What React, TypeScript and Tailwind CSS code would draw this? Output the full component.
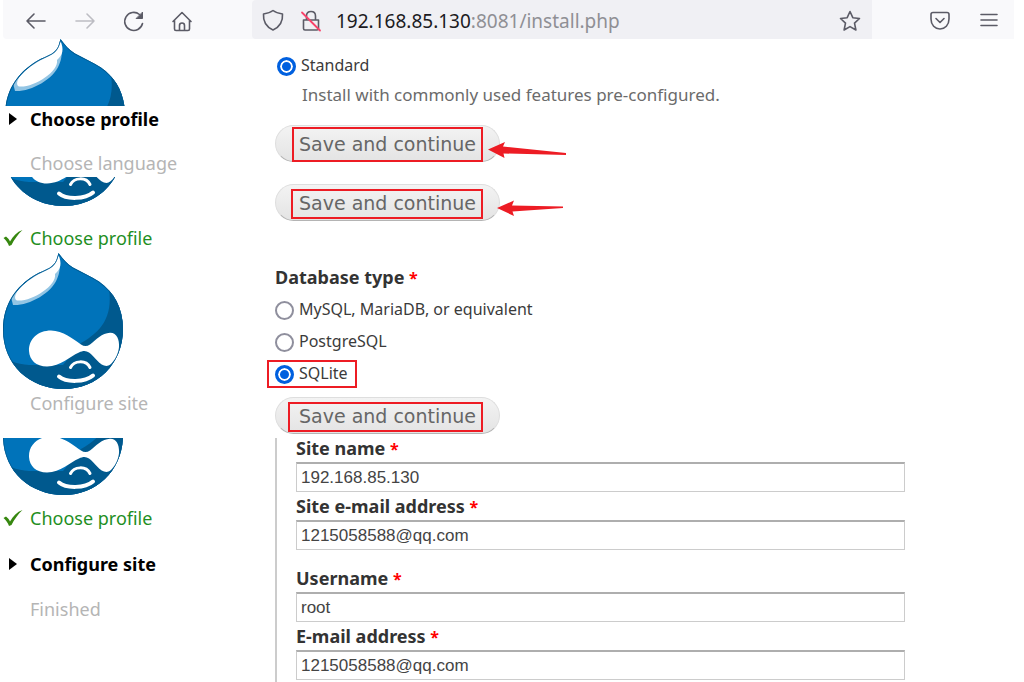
import { useState, type ReactNode } from "react";

const BODY_FONT = "font-['Noto_Sans',sans-serif]";

function Droplet({ id }: { id: string }) {
  return (
    <svg width="120" height="136" viewBox="0 0 120 136" className="block shrink-0" aria-hidden="true">
      <defs>
        <clipPath id={id}>
          <path d="M55.5 0C60 6 64 11 70 14.500C78 19 88 23 96 28.500C111 39 120 55 120 76C120 111 94 136 61 136C27 136 0 112 0 77C0 50 14 33 31 22.500C38 18 46 16.500 50 12C53.500 9 54 5 55.500 0Z" />
        </clipPath>
      </defs>
      <g clipPath={`url(#${id})`}>
        <rect width="120" height="136" fill="#0073ba" />
        <path d="M106 36C110 64 98 79 78 90L60 112H26C20 111 14 111 8 108L14 136H120V40Z" fill="#00598e" />
        <path d="M55 4C58 10 57 20 54 26C48 41 25 53 10 52L8 44L30 23Z" fill="#93c5e4" />
        <path d="M55.500 2C59 10 58 16 52 21C54 33 28 49 14 47.500C9 45 14 34 31 24C42 17 53 16 55.500 2Z" fill="#fff" />
        <path d="M55.5 0C60 6 64 11 70 14.500C78 19 88 23 96 28.500C111 39 120 55 120 76C120 111 94 136 61 136C27 136 0 112 0 77C0 50 14 33 31 22.500C38 18 46 16.500 50 12C53.500 9 54 5 55.500 0Z" fill="none" stroke="#00598e" strokeWidth="1.6" />
      </g>
      <path d="M26 98C25.500 86 35 77.500 48 77.500C60 77.500 70 86 78 91.500C81 93.500 84 93.500 87 91.500C93 87 99 80 107 79.800C114 79.600 116.500 87 116 94C115.500 102 109 113 103.500 113C97 113 91 103 86 99.500C83 97.500 80 97.500 76 99.500C66 104 58 113 44 113.500C33 113.500 26.500 107 26 98Z" fill="#fff" />
      <path d="M67.500 114.500C71 107.500 83 106.500 87 114.500" fill="none" stroke="#fff" strokeWidth="3" strokeLinecap="round" />
      <path d="M56 123.500C63 129.500 82 129.500 90 122.500" fill="none" stroke="#fff" strokeWidth="4" strokeLinecap="round" />
    </svg>
  );
}

type StepState = "done" | "active" | "todo";

const stepTone: Record<StepState, string> = {
  done: "text-[#1f8f1f]",
  active: "font-bold text-black",
  todo: "text-[#b5b5b5]",
};

function Step({ state, children, className = "" }: { state: StepState; children: ReactNode; className?: string }) {
  return (
    <li className={`flex h-[26px] items-center text-[18px] leading-6 ${stepTone[state]} ${className}`}>
      <span className="flex w-[30px] shrink-0 items-center pl-[3px]">
        {state === "done" && (
          <svg width="20" height="18" viewBox="0 0 20 18" aria-hidden="true">
            <path d="M0.500 9L3 7.500C5 9 6 10.500 7 12.500C10 7 14 3 19.500 1C15 5 11 11 8.500 16L6 17C5 14 3 11 0.500 9Z" fill="#36870f" />
          </svg>
        )}
        {state === "active" && (
          <svg width="14" height="12" viewBox="0 0 14 12" aria-hidden="true">
            <path d="M6 0L14 6L6 12Z" fill="#000" />
          </svg>
        )}
      </span>
      {children}
    </li>
  );
}

function SaveButton({ className = "", children }: { className?: string; children?: ReactNode }) {
  return (
    <div className={`relative w-[225px] ${className}`}>
      <button
        type="button"
        className="block h-[37px] w-full rounded-full border border-[#dedede] border-b-[#b4b4b4] bg-linear-to-b from-[#f3f3f3] to-[#e4e4e4] pt-px font-['DejaVu_Sans',Verdana,sans-serif] text-[19px] leading-[34px] text-[#666]"
      >
        Save and continue
      </button>
      {children}
    </div>
  );
}

function Radio(props: { name: string; label: string; checked: boolean; onChange: () => void; className?: string }) {
  return (
    <label className={`flex items-center gap-[5px] text-base leading-[32px] text-[#3b3b3b] ${props.className ?? ""}`}>
      <input
        type="radio"
        name={props.name}
        checked={props.checked}
        onChange={props.onChange}
        className="mt-[2px] size-[19px] shrink-0 appearance-none rounded-full border-2 border-[#8f8f9d] bg-white checked:border-[3px] checked:border-[#0060df] checked:bg-[#0060df] checked:shadow-[inset_0_0_0_2px_white]"
      />
      {props.label}
    </label>
  );
}

function Required() {
  return <span className="text-base leading-5 text-[#f00]">*</span>;
}

function Field({ id, label, value, className = "" }: { id: string; label: string; value: string; className?: string }) {
  return (
    <div className={className}>
      <label htmlFor={id} className="block h-6 text-[18px] leading-5 font-bold text-[#333]">
        {label} <Required />
      </label>
      <input
        id={id}
        type="text"
        defaultValue={value}
        className="block h-[30px] w-full border border-t-2 border-[#ccc] border-t-[#aeaeae] bg-white px-1 font-['Liberation_Sans',Arial,sans-serif] text-[17px] leading-6 text-[#444]"
      />
    </div>
  );
}

function Arrow({ path, className }: { path: string; className: string }) {
  return (
    <svg width="80" height="18" viewBox="0 0 80 18" className={`pointer-events-none absolute ${className}`} aria-hidden="true">
      <path d={path} fill="#ed1c24" />
    </svg>
  );
}

const markBox = "pointer-events-none absolute border-[2px] border-[#ed1c24]";

function NavButton({ label, children, className = "" }: { label: string; children: ReactNode; className?: string }) {
  return (
    <button type="button" aria-label={label} className={`flex size-6 shrink-0 items-center justify-center ${className}`}>
      <svg
        width="24"
        height="24"
        viewBox="0 0 24 24"
        fill="none"
        stroke="#5b5b66"
        strokeWidth="1.6"
        strokeLinecap="round"
        strokeLinejoin="round"
        aria-hidden="true"
      >
        {children}
      </svg>
    </button>
  );
}

function AddressField() {
  const [address, setAddress] = useState("192.168.85.130:8081/install.php");
  const split = address.search(/[:/]/);
  const hostEnd = split < 0 ? address.length : split;

  return (
    <div className="relative ml-[13px] min-w-0 flex-1 text-[19px] leading-6">
      <span className="block truncate text-[#8f8f94]" aria-hidden="true">
        <span className="text-[#1c1b22]">{address.slice(0, hostEnd)}</span>
        {address.slice(hostEnd)}
      </span>
      <input
        type="text"
        aria-label="Address"
        value={address}
        onChange={(event) => setAddress(event.target.value)}
        className="absolute inset-0 w-full bg-transparent text-transparent caret-[#1c1b22] outline-none"
      />
    </div>
  );
}

function BrowserBar() {
  return (
    <header className="mr-[10px] ml-[3px] flex h-[39px] items-stretch rounded-bl bg-[#f9f9fb]">
      <nav className="flex w-[249px] shrink-0 items-center gap-[25px] pt-[3px] pl-[21px]">
        <NavButton label="Back">
          <path d="M21 12H3M10 5L3 12L10 19" />
        </NavButton>
        <NavButton label="Forward">
          <path d="M3 12H21M14 5L21 12L14 19" stroke="#bdbdc3" />
        </NavButton>
        <NavButton label="Reload">
          <path d="M20.500 14.500A9 9 0 1 1 17.500 5.500" />
          <path d="M20.500 3.500V9.500H14.500Z" fill="#5b5b66" strokeWidth="1" />
        </NavButton>
        <NavButton label="Home">
          <path d="M2 12.500L11 3.500L20 12.500M3.500 11.500V20Q3.500 21.500 5 21.500H17Q18.500 21.500 18.500 20V11.500M8.500 21.500V16.500Q8.500 14 11 14Q13.500 14 13.500 16.500V21.500" />
        </NavButton>
      </nav>
      <div className="flex min-w-0 flex-1 items-center rounded-l bg-[#f0f0f4] pt-[3px] pr-[10px] pl-[9px]">
        <NavButton label="Tracking protection">
          <path d="M12 1.500C14.500 3.500 18 4.500 21.500 5C22 12 18.500 18 12 21C5.500 18 2 12 2.500 5C6 4.500 9.500 3.500 12 1.500Z" />
        </NavButton>
        <NavButton label="Connection not secure" className="ml-[14px]">
          <path d="M4.500 11H19.500V19.500Q19.500 21 18 21H6Q4.500 21 4.500 19.500ZM7.500 11V7Q7.500 2.500 12 2.500Q16.500 2.500 16.500 7V11" />
          <path d="M3 3.500L21 21.500" stroke="#f9436b" strokeWidth="1.8" />
        </NavButton>
        <AddressField />
        <NavButton label="Bookmark this page">
          <path d="M12 2.500L14.800 8.700L21.500 9.500L16.500 14.200L17.900 21L12 17.600L6.100 21L7.500 14.200L2.500 9.500L9.200 8.700Z" />
        </NavButton>
      </div>
      <div className="flex w-[142px] shrink-0 items-center gap-[25px] pt-[3px] pl-[56px]">
        <NavButton label="Save to Pocket">
          <path d="M5 3.500H19Q21 3.500 21 5.500V10C21 16 17 20 12 20C7 20 3 16 3 10V5.500Q3 3.500 5 3.500ZM8 9.500L12 13.500L16 9.500" />
        </NavButton>
        <NavButton label="Menu">
          <path d="M4 5.500H20M4 11H20M4 16.500H20" />
        </NavButton>
      </div>
    </header>
  );
}

const databases = ["MySQL, MariaDB, or equivalent", "PostgreSQL", "SQLite"];

export default function App() {
  const [profile, setProfile] = useState("Standard");
  const [database, setDatabase] = useState("SQLite");

  return (
    <div className={`min-h-screen bg-white ${BODY_FONT}`}>
      <BrowserBar />
      <div className="flex">
        <aside className="w-[275px] shrink-0">
          <div className="h-[67px] overflow-hidden pl-[5px]">
            <Droplet id="drop-a" />
          </div>
          <ol>
            <Step state="active">Choose profile</Step>
            <Step state="todo" className="mt-[18px]">Choose language</Step>
          </ol>
          <div className="mt-px flex h-[29px] items-end overflow-hidden pl-[3px]">
            <Droplet id="drop-b" />
          </div>
          <ol className="mt-[19px]">
            <Step state="done">Choose profile</Step>
          </ol>
          <div className="mt-[2px] pl-[3px]">
            <Droplet id="drop-c" />
          </div>
          <ol className="mt-px">
            <Step state="todo">Configure site</Step>
          </ol>
          <div className="mt-[22px] flex h-[57px] items-end overflow-hidden pl-[3px]">
            <Droplet id="drop-d" />
          </div>
          <ol className="mt-[10px]">
            <Step state="done">Choose profile</Step>
            <Step state="active" className="mt-5">Configure site</Step>
            <Step state="todo" className="mt-[19px]">Finished</Step>
          </ol>
        </aside>

        <main className="min-w-0 flex-1 pt-[10px]">
          <Radio
            name="profile"
            label="Standard"
            checked={profile === "Standard"}
            onChange={() => setProfile("Standard")}
            className="ml-[2px]"
          />
          <p className="ml-[27px] h-7 text-[17px] leading-7 text-[#6b6b6b]">
            Install with commonly used features pre-configured.
          </p>
          <SaveButton className="mt-4">
            <span className={`${markBox} top-[2px] left-[17px] h-[35px] w-[191px]`} />
            <Arrow className="top-4 left-[213px]" path="M0 8.500L17 1L15 5.500L78 12V14L15.500 12.500L16.500 17Z" />
          </SaveButton>
          <SaveButton className="mt-[22px]">
            <span className={`${markBox} top-[5px] left-4 h-[30px] w-[192px]`} />
            <Arrow className="top-[15px] left-[222px]" path="M0 9L17 1.500L15 6.500L66 7.500V9L15.500 12.500L17 17Z" />
          </SaveButton>

          <fieldset className="mt-11">
            <legend className="h-7 text-[18px] leading-6 font-bold text-[#333]">
              Database type <Required />
            </legend>
            {databases.map((name) => (
              <div key={name} className="relative w-fit">
                <Radio name="database" label={name} checked={database === name} onChange={() => setDatabase(name)} />
                {name === "SQLite" && <span className={`${markBox} top-[3px] -left-2 h-7 w-[90px]`} />}
              </div>
            ))}
          </fieldset>
          <SaveButton className="mt-2">
            <span className={`${markBox} top-[5px] left-[13px] h-[30px] w-[195px]`} />
          </SaveButton>

          <form className="mt-1 mr-[119px] border-l-2 border-[#ccc] pb-[3px] pl-[19px]">
            <Field id="site-name" label="Site name" value="192.168.85.130" />
            <Field id="site-mail" label="Site e-mail address" value="1215058588@qq.com" className="mt-1" />
            <Field id="username" label="Username" value="root" className="mt-[18px]" />
            <Field id="mail" label="E-mail address" value="1215058588@qq.com" className="mt-1" />
          </form>
        </main>
      </div>
    </div>
  );
}
